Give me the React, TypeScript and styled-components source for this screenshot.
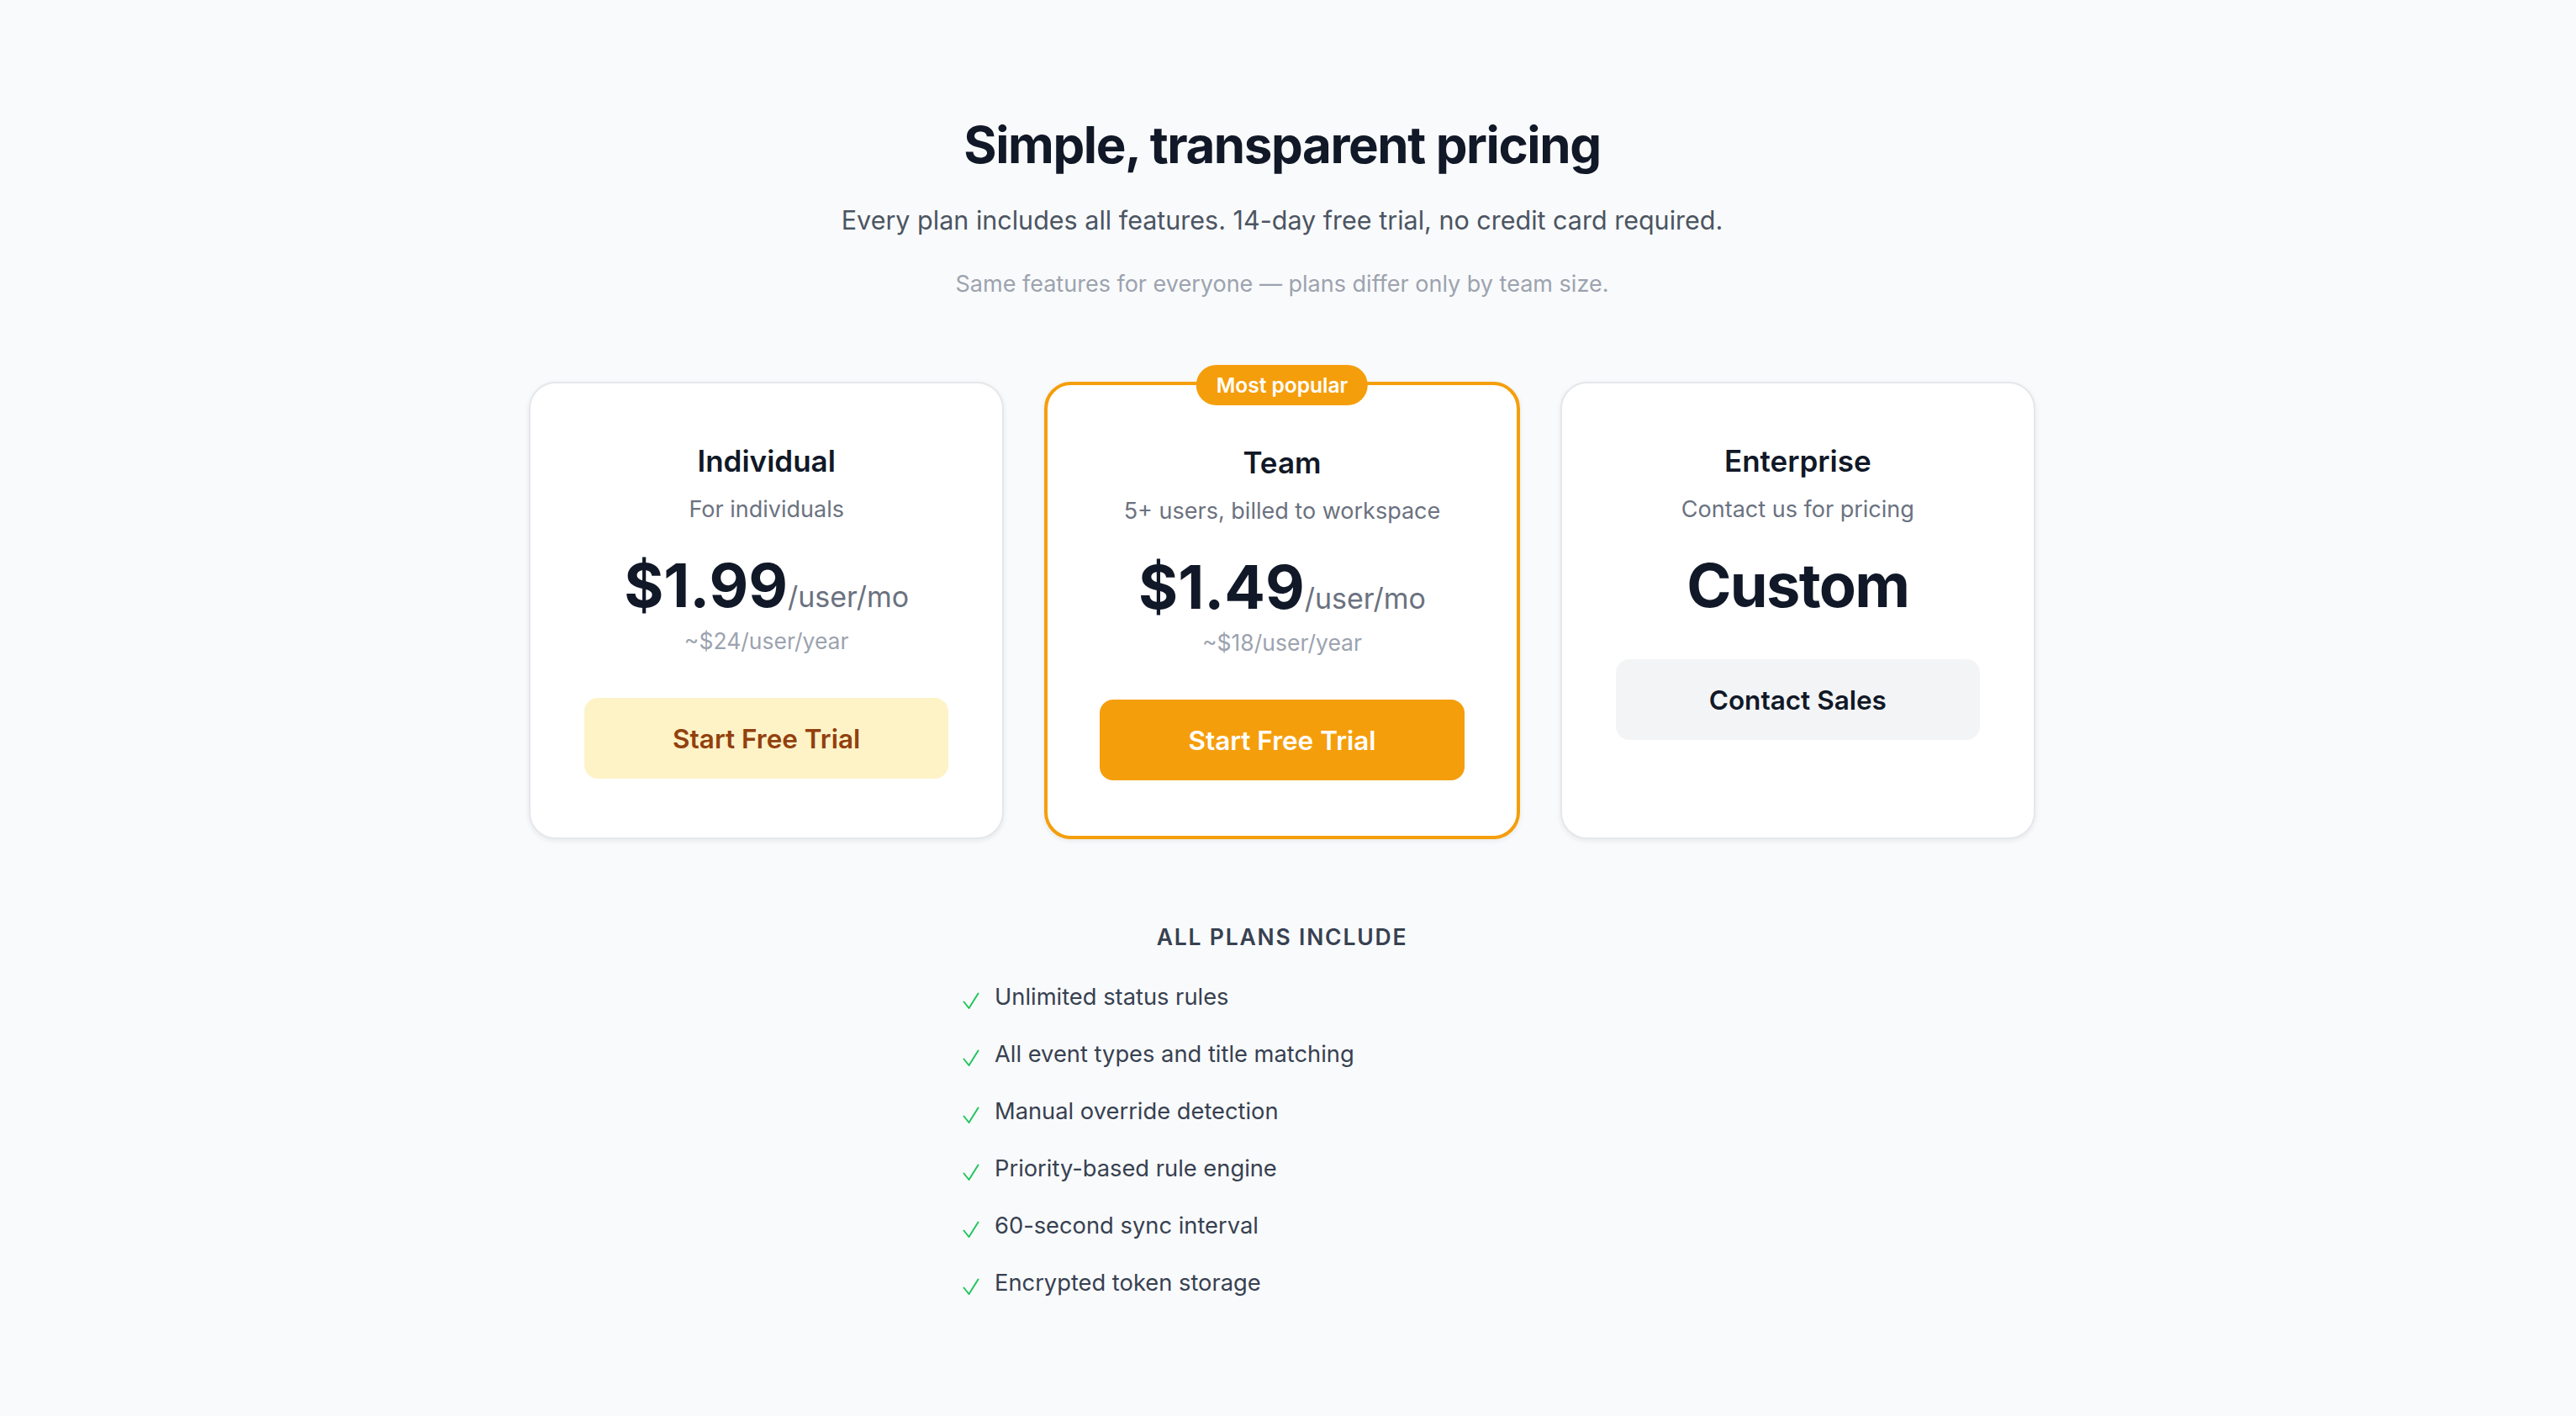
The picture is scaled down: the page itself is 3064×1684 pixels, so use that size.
import React from 'react';
import styled, { createGlobalStyle } from 'styled-components';

interface Plan {
  name: string;
  blurb: string;
  price: string;
  unit?: string;
  yearly?: string;
  cta: string;
  variant: 'soft' | 'solid' | 'neutral';
  featured?: boolean;
}

const plans: Plan[] = [
  {
    name: 'Individual',
    blurb: 'For individuals',
    price: '$1.99',
    unit: '/user/mo',
    yearly: '~$24/user/year',
    cta: 'Start Free Trial',
    variant: 'soft',
  },
  {
    name: 'Team',
    blurb: '5+ users, billed to workspace',
    price: '$1.49',
    unit: '/user/mo',
    yearly: '~$18/user/year',
    cta: 'Start Free Trial',
    variant: 'solid',
    featured: true,
  },
  {
    name: 'Enterprise',
    blurb: 'Contact us for pricing',
    price: 'Custom',
    cta: 'Contact Sales',
    variant: 'neutral',
  },
];

const features = [
  'Unlimited status rules',
  'All event types and title matching',
  'Manual override detection',
  'Priority-based rule engine',
  '60-second sync interval',
  'Encrypted token storage',
];

const GlobalStyle = createGlobalStyle`
  html, body {
    margin: 0;
    padding: 0;
    background: #f9fafb;
  }
  body {
    font-family: Inter, "Noto Sans", "Liberation Sans", sans-serif;
    -webkit-font-smoothing: antialiased;
  }
  * {
    box-sizing: border-box;
  }
`;

const Page = styled.main`
  min-height: 1684px;
  padding: 136px 14px 120px 0;
  display: flex;
  flex-direction: column;
  align-items: center;
`;

const Header = styled.header`
  display: flex;
  flex-direction: column;
  align-items: center;
  text-align: center;
`;

const Heading = styled.h1`
  margin: 0;
  font-size: 60px;
  line-height: 72px;
  font-weight: 700;
  letter-spacing: -1.4px;
  color: #111827;
`;

const Lead = styled.p`
  margin: 32px 0 0;
  font-size: 30.5px;
  line-height: 44px;
  color: #4b5563;
`;

const Note = styled.p`
  margin: 34px 0 0;
  font-size: 27px;
  line-height: 40px;
  color: #9ca3af;
`;

const Grid = styled.section`
  margin-top: 96px;
  width: 1792px;
  display: grid;
  grid-template-columns: repeat(3, 1fr);
  gap: 48px;
`;

const Card = styled.div<{ $featured?: boolean }>`
  position: relative;
  display: flex;
  flex-direction: column;
  align-items: center;
  text-align: center;
  background: #ffffff;
  border: ${(p) => (p.$featured ? '4px solid #f59e0b' : '2px solid #e5e7eb')};
  border-radius: 32px;
  padding: 64px ${(p) => (p.$featured ? '62px' : '64px')} 66px;
  box-shadow: 0 2px 6px rgba(17, 24, 39, 0.08);
`;

const Badge = styled.span`
  position: absolute;
  top: 0;
  left: 50%;
  transform: translate(-50%, -50%);
  height: 48px;
  padding: 0 24px;
  display: inline-flex;
  align-items: center;
  border-radius: 999px;
  background: #f59e0b;
  color: #ffffff;
  font-size: 24.5px;
  font-weight: 600;
  white-space: nowrap;
`;

const PlanName = styled.h3`
  margin: 0;
  font-size: 35px;
  line-height: 56px;
  font-weight: 600;
  color: #111827;
`;

const Blurb = styled.p`
  margin: 10px 0 0;
  font-size: 27px;
  line-height: 40px;
  color: #6b7280;
`;

const PriceRow = styled.div`
  margin-top: 30px;
  display: flex;
  align-items: baseline;
  justify-content: center;
`;

const Price = styled.span<{ $tight?: boolean }>`
  font-size: 72px;
  line-height: 80px;
  font-weight: 700;
  letter-spacing: ${(p) => (p.$tight ? '-1.6px' : '0')};
  color: #111827;
`;

const Unit = styled.span`
  font-size: 34px;
  color: #6b7280;
`;

const Yearly = styled.p`
  margin: 6px 0 0;
  font-size: 26.5px;
  line-height: 40px;
  color: #9ca3af;
`;

const variants = {
  soft: { bg: '#fef3c7', fg: '#92400e' },
  solid: { bg: '#f59e0b', fg: '#ffffff' },
  neutral: { bg: '#f3f4f6', fg: '#111827' },
};

const Button = styled.button<{ $variant: Plan['variant'] }>`
  margin-top: 48px;
  width: 100%;
  height: 96px;
  border: none;
  border-radius: 16px;
  background: ${(p) => variants[p.$variant].bg};
  color: ${(p) => variants[p.$variant].fg};
  font-family: inherit;
  font-size: 31.5px;
  font-weight: 600;
  cursor: pointer;
`;

const Includes = styled.section`
  margin-top: 96px;
  display: flex;
  flex-direction: column;
  align-items: center;
`;

const IncludesTitle = styled.h4`
  margin: 0;
  font-size: 26.5px;
  line-height: 40px;
  font-weight: 600;
  letter-spacing: 1.8px;
  text-transform: uppercase;
  color: #374151;
`;

const FeatureList = styled.ul`
  margin: 30px 0 0;
  padding: 0;
  list-style: none;
  width: 760px;
  display: flex;
  flex-direction: column;
  gap: 24px;
`;

const FeatureItem = styled.li`
  display: flex;
  align-items: flex-start;
  gap: 18px;
  font-size: 27.3px;
  line-height: 44px;
  color: #374151;
`;

const Check = styled.svg`
  flex: none;
  margin-top: 16px;
  width: 20px;
  height: 20px;
`;

function CheckMark() {
  return (
    <Check viewBox="0 0 20 20" fill="none">
      <path d="M1.5 11.5 L7.5 19 L18.5 1.5" stroke="#22c55e" strokeWidth="2" strokeLinecap="round" strokeLinejoin="round" />
    </Check>
  );
}

function PlanCard({ plan }: { plan: Plan }) {
  return (
    <Card $featured={plan.featured}>
      {plan.featured && <Badge>Most popular</Badge>}
      <PlanName>{plan.name}</PlanName>
      <Blurb>{plan.blurb}</Blurb>
      <PriceRow>
        <Price $tight={!plan.unit}>{plan.price}</Price>
        {plan.unit && <Unit>{plan.unit}</Unit>}
      </PriceRow>
      {plan.yearly && <Yearly>{plan.yearly}</Yearly>}
      <Button $variant={plan.variant}>{plan.cta}</Button>
    </Card>
  );
}

export default function App() {
  return (
    <>
      <GlobalStyle />
      <Page>
        <Header>
          <Heading>Simple, transparent pricing</Heading>
          <Lead>Every plan includes all features. 14-day free trial, no credit card required.</Lead>
          <Note>Same features for everyone — plans differ only by team size.</Note>
        </Header>
        <Grid>
          {plans.map((plan) => (
            <PlanCard key={plan.name} plan={plan} />
          ))}
        </Grid>
        <Includes>
          <IncludesTitle>All plans include</IncludesTitle>
          <FeatureList>
            {features.map((f) => (
              <FeatureItem key={f}>
                <CheckMark />
                <span>{f}</span>
              </FeatureItem>
            ))}
          </FeatureList>
        </Includes>
      </Page>
    </>
  );
}
